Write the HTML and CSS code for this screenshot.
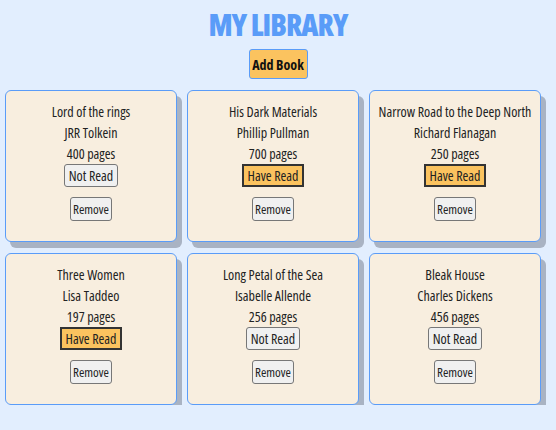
FILE: index.html
```html
<!DOCTYPE html>
<html>
<head>
<meta charset="utf-8">
<link rel="stylesheet" href="styles.css">
</head>
<body>
<header class="top">
  <h1 class="title">MY LIBRARY</h1>
  <button class="add-btn">Add Book</button>
</header>
<main class="library">
  <div class="card">
    <p class="line">Lord of the rings</p>
    <p class="line">JRR Tolkein</p>
    <p class="line">400 pages</p>
    <button class="read-btn">Not Read</button>
    <button class="remove-btn">Remove</button>
  </div>
  <div class="card">
    <p class="line">His Dark Materials</p>
    <p class="line">Phillip Pullman</p>
    <p class="line">700 pages</p>
    <button class="read-btn is-read">Have Read</button>
    <button class="remove-btn">Remove</button>
  </div>
  <div class="card">
    <p class="line">Narrow Road to the Deep North</p>
    <p class="line">Richard Flanagan</p>
    <p class="line">250 pages</p>
    <button class="read-btn is-read">Have Read</button>
    <button class="remove-btn">Remove</button>
  </div>
  <div class="card">
    <p class="line">Three Women</p>
    <p class="line">Lisa Taddeo</p>
    <p class="line">197 pages</p>
    <button class="read-btn is-read">Have Read</button>
    <button class="remove-btn">Remove</button>
  </div>
  <div class="card">
    <p class="line">Long Petal of the Sea</p>
    <p class="line">Isabelle Allende</p>
    <p class="line">256 pages</p>
    <button class="read-btn">Not Read</button>
    <button class="remove-btn">Remove</button>
  </div>
  <div class="card">
    <p class="line">Bleak House</p>
    <p class="line">Charles Dickens</p>
    <p class="line">456 pages</p>
    <button class="read-btn">Not Read</button>
    <button class="remove-btn">Remove</button>
  </div>
</main>
</body>
</html>
```
FILE: styles.css
```css
* { box-sizing: border-box; }
body {
  margin: 0;
  background: #e2eefe;
  font-family: "Open Sans", "Noto Sans", sans-serif;
  font-stretch: 75%;
  color: #222;
}
button {
  font-family: inherit;
  font-stretch: inherit;
  white-space: nowrap;
}
.top {
  display: flex;
  flex-direction: column;
  align-items: center;
  padding-top: 8px;
}
.title {
  margin: 0;
  font-size: 30px;
  line-height: 34px;
  font-weight: 800;
  letter-spacing: -1px;
  color: #5a9cf8;
}
.add-btn {
  margin-top: 7px;
  width: 59px;
  height: 30px;
  padding: 0;
  background: #fbc35f;
  border: 1px solid #5a9cf8;
  border-radius: 3px;
  font-weight: bold;
  font-size: 14px;
  color: #111;
}
.library {
  display: grid;
  grid-template-columns: repeat(3, 172px);
  grid-auto-rows: 152px;
  column-gap: 10px;
  row-gap: 11px;
  margin: 11px 0 0 5px;
}
.card {
  display: flex;
  flex-direction: column;
  align-items: center;
  padding-top: 10px;
  background: #f8eedf;
  border: 1px solid #5a9cf8;
  border-radius: 6px;
  box-shadow: 5px 6px 0 #a9b3c3;
}
.line {
  margin: 0;
  font-size: 14px;
  line-height: 21px;
}
.read-btn {
  height: 23px;
  padding: 0 4px;
  background: #f0f0f0;
  border: 1px solid #777;
  border-radius: 3px;
  font-size: 14px;
  color: #222;
}
.read-btn.is-read {
  background: #fbc35f;
  border: 2px solid #333;
  border-radius: 0;
}
.remove-btn {
  margin-top: 10px;
  height: 24px;
  padding: 0 2px;
  background: #f0f0f0;
  border: 1px solid #777;
  border-radius: 3px;
  font-size: 13px;
  color: #222;
}
```
